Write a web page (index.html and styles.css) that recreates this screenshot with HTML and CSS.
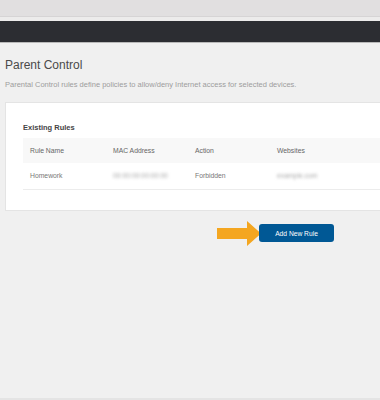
FILE: index.html
```html
<!DOCTYPE html>
<html lang="en">
<head>
  <meta charset="UTF-8">
  <title>Parent Control</title>
  <link rel="stylesheet" href="styles.css">
</head>
<body>
  <div class="topbar"></div>
  <div class="topbar-strip"></div>
  <div class="navbar"></div>

  <div class="content">
    <h1 class="page-title">Parent Control</h1>
    <p class="page-desc">Parental Control rules define policies to allow/deny Internet access for selected devices.</p>

    <div class="card">
      <h2 class="card-title">Existing Rules</h2>
      <table class="rules">
        <thead>
          <tr>
            <th class="col-name">Rule Name</th>
            <th class="col-mac">MAC Address</th>
            <th class="col-action">Action</th>
            <th>Websites</th>
          </tr>
        </thead>
        <tbody>
          <tr>
            <td>Homework</td>
            <td><span class="blurred">00:00:00:00:00:00</span></td>
            <td>Forbidden</td>
            <td><span class="blurred">example.com</span></td>
          </tr>
        </tbody>
      </table>
    </div>

    <div class="actions">
      <svg class="arrow" width="44" height="25" viewBox="0 0 44 25">
        <path d="M0 7 H30 V0 L44 12.5 L30 25 V18 H0 Z" fill="#f4a620"/>
      </svg>
      <button class="btn">Add New Rule</button>
    </div>
  </div>

  <div class="footer-line"></div>
</body>
</html>
```

FILE: styles.css
```css
* {
  box-sizing: border-box;
}

body {
  margin: 0;
  height: 400px;
  overflow: hidden;
  background: #f0f0f0;
  font-family: "Liberation Sans", Arial, sans-serif;
  display: flex;
  flex-direction: column;
}

.topbar {
  height: 17px;
  background: #e1dfe0;
  border-bottom: 1px solid #d6d4d5;
}

.topbar-strip {
  height: 4px;
  background: #ecebeb;
}

.navbar {
  height: 22px;
  background: #2c2d32;
  border-bottom: 1px solid #b9b9b9;
}

.content {
  flex: 1;
  padding-left: 5px;
}

.page-title {
  margin: 15px 0 0;
  font-size: 12px;
  line-height: 14px;
  font-weight: normal;
  color: #4a4a4a;
}

.page-desc {
  margin: 8px 0 0;
  font-size: 7.5px;
  line-height: 10px;
  color: #9d9d9d;
}

.card {
  margin-top: 12px;
  background: #fff;
  border: 1px solid #e4e4e4;
  border-right: none;
  padding: 0 0 20px 17px;
}

.card-title {
  margin: 20px 0 0;
  font-size: 7.5px;
  line-height: 10px;
  font-weight: bold;
  color: #444;
}

.rules {
  margin-top: 5px;
  width: 100%;
  border-collapse: collapse;
  font-size: 6.8px;
}

.rules th {
  height: 25px;
  background: #f8f8f8;
  font-weight: normal;
  color: #666;
  text-align: left;
  padding: 0 0 0 7px;
}

.rules td {
  height: 26px;
  color: #777;
  padding: 0 0 0 7px;
  border-bottom: 1px solid #ececec;
}

.col-name {
  width: 83px;
}

.col-mac {
  width: 82px;
}

.col-action {
  width: 82px;
}

.blurred {
  color: #a8a8a8;
  filter: blur(1.4px);
}

.actions {
  display: flex;
  align-items: center;
  margin-top: 10px;
  padding-left: 212px;
}

.arrow {
  display: block;
}

.btn {
  margin-left: -2px;
  width: 75px;
  height: 18px;
  border: none;
  border-radius: 3px;
  background: #005895;
  color: #fff;
  font-family: "Liberation Sans", Arial, sans-serif;
  font-size: 6.7px;
  padding: 0;
}

.footer-line {
  height: 2px;
  background: #e4e4e4;
}
```
